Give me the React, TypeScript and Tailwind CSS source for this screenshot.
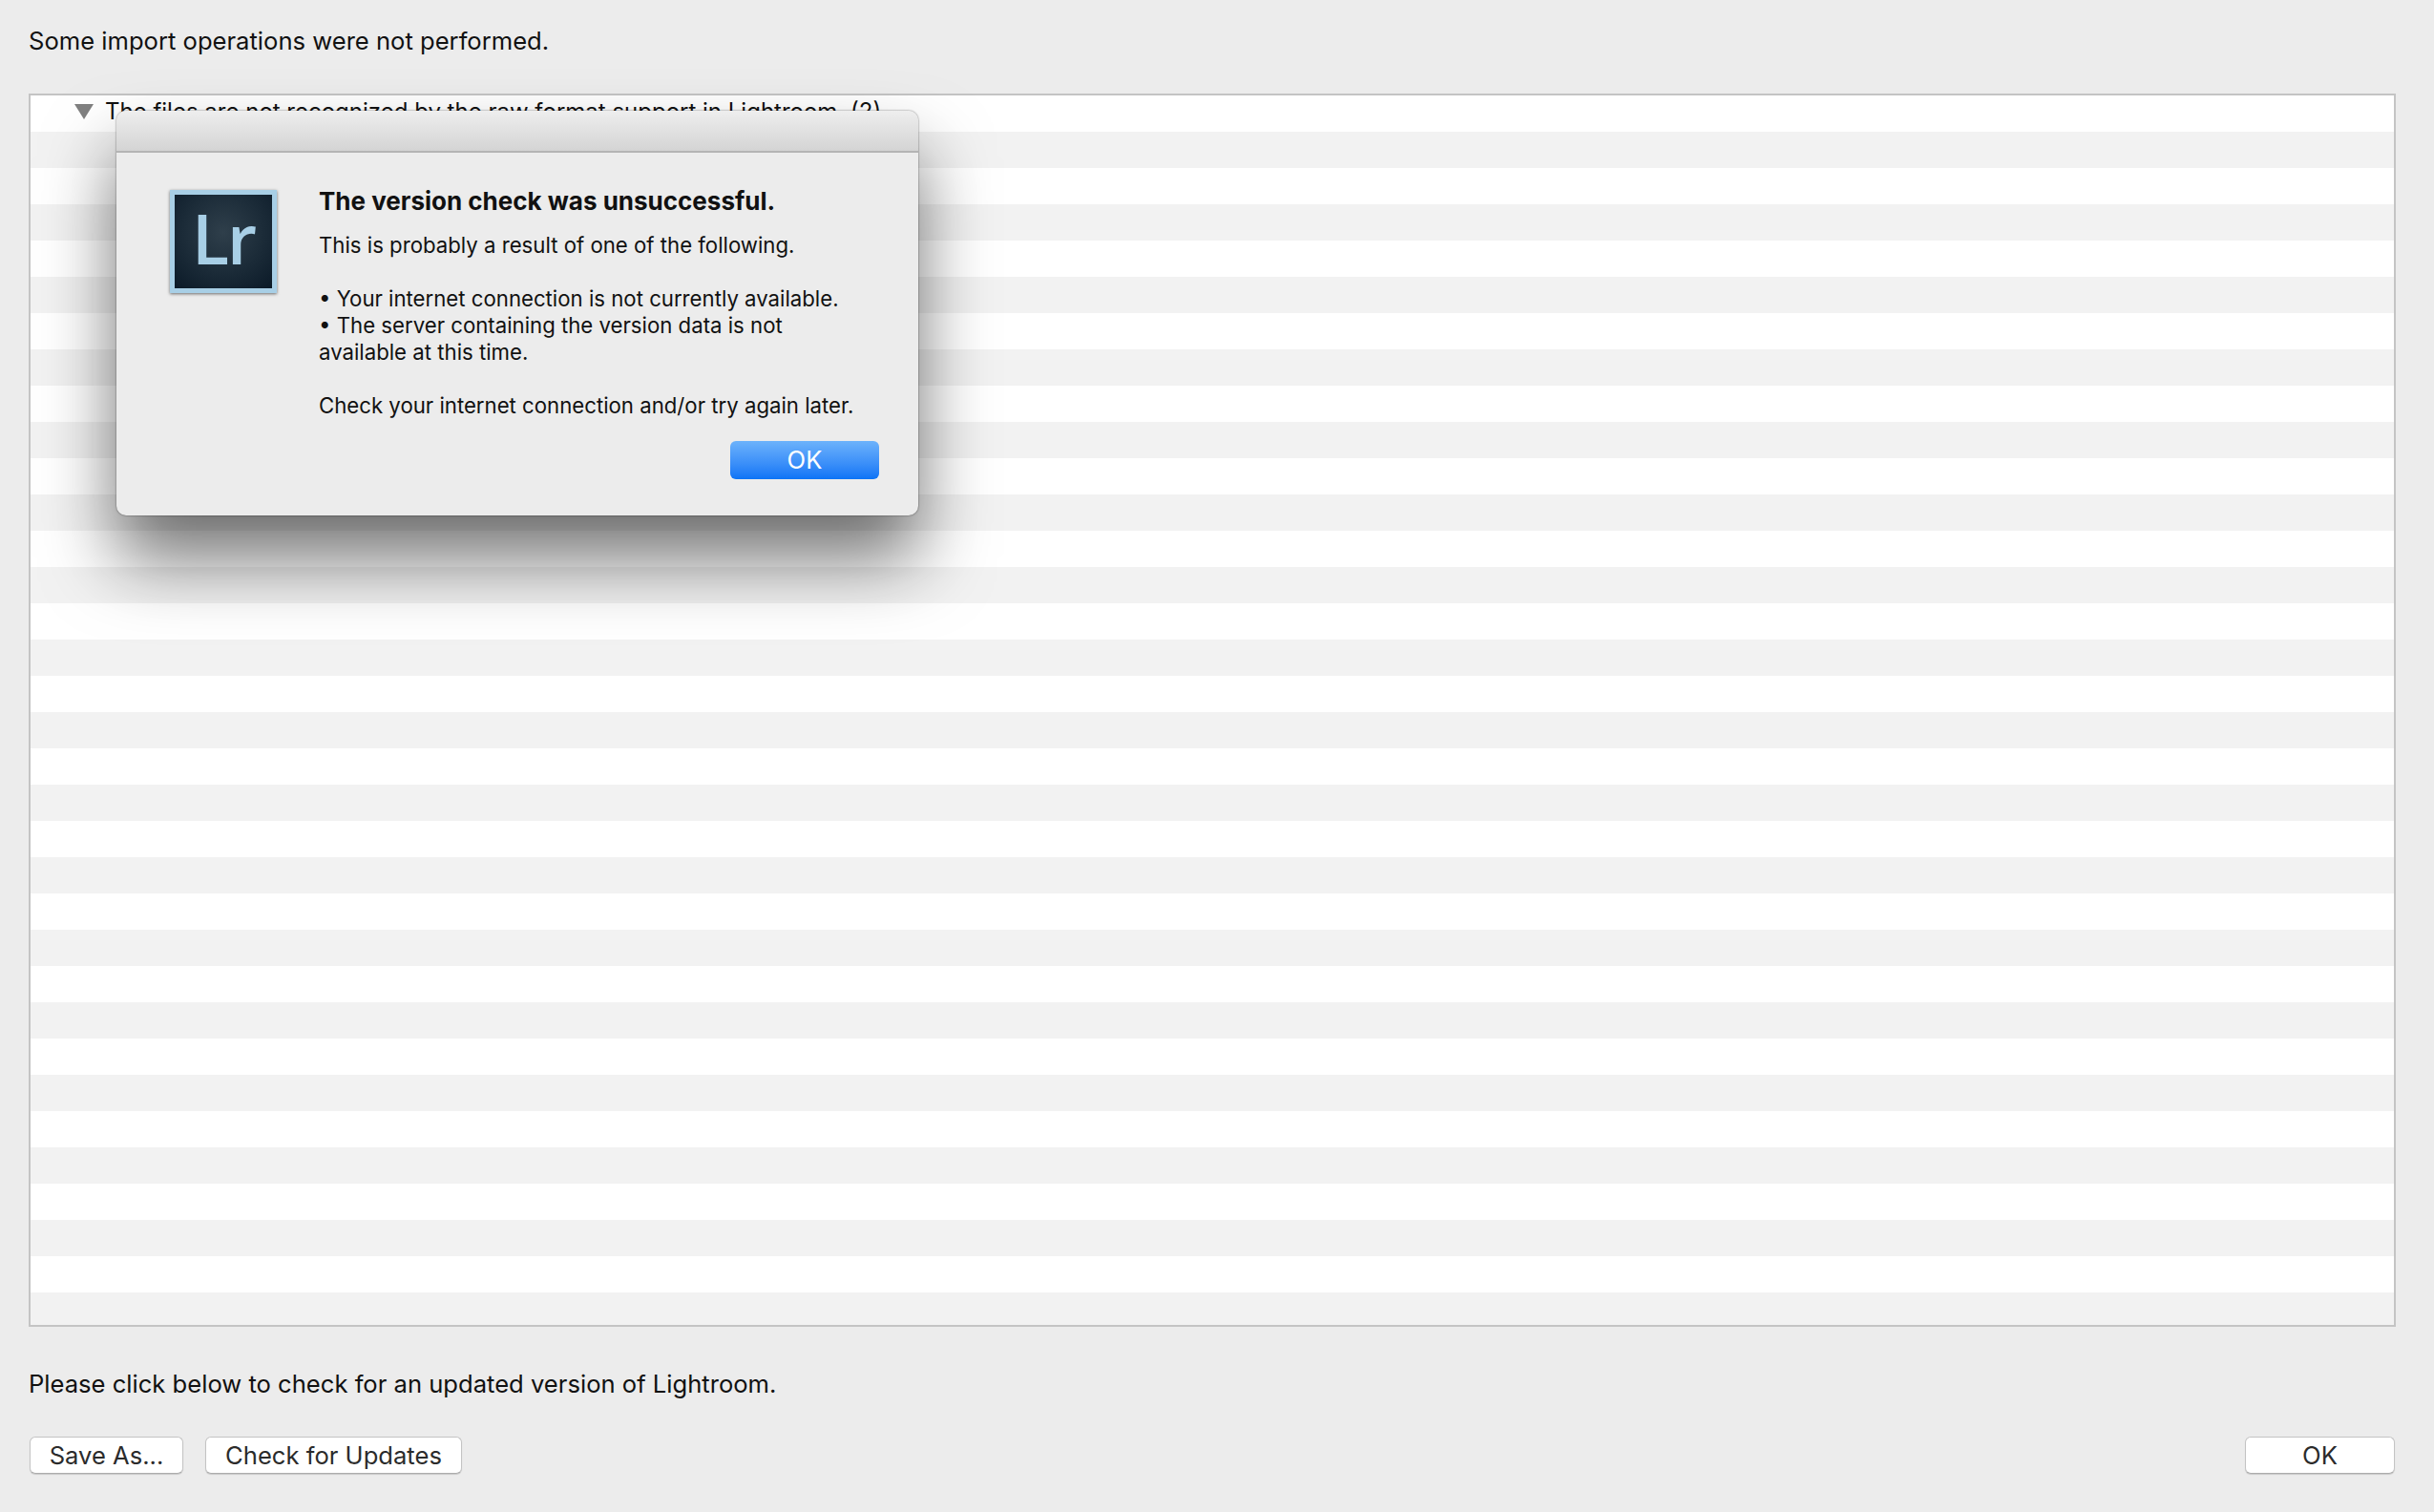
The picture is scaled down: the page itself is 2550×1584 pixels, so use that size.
import React from "react";

const rows = Array.from({ length: 34 });

function WhiteButton({ label, className }: { label: string; className: string }) {
  return (
    <button className={`h-[39px] rounded-[6px] border border-[#c4c4c4] border-b-[#adadad] bg-white text-[25.6px] leading-none text-[#2b2b2b] shadow-[0_1px_1px_rgba(0,0,0,0.15)] ${className}`}>
      {label}
    </button>
  );
}

function LrIcon() {
  return (
    <div className="flex h-[108px] w-[112px] shrink-0 items-center justify-center border-[5px] border-[#a8cfe6] bg-[radial-gradient(circle_at_50%_40%,#2f3f4b_0%,#1b2b38_55%,#0b1a28_100%)] pb-[9px] shadow-[0_1px_3px_rgba(0,0,0,0.55)]">
      <span className="text-[72px] font-semibold leading-none tracking-[-2px] text-[#a8cfe6] font-['Open_Sans',sans-serif]">Lr</span>
    </div>
  );
}

export default function App() {
  return (
    <div className="relative flex h-[1584px] w-[2550px] flex-col overflow-hidden bg-[#ececec] px-[30px] pr-[40px] font-['Inter',sans-serif] text-[#111]">
      <p className="flex h-[98px] items-start pt-[25px] text-[25.6px] leading-[36px]">Some import operations were not performed.</p>

      <div className="h-[1292px] overflow-hidden border-2 border-[#c4c4c4] bg-white">
        {rows.map((_, i) => (
          <div key={i} className={`h-[38px] ${i % 2 === 1 ? "bg-[#f2f2f2]" : "bg-white"}`}>
            {i === 0 && (
              <div className="flex items-center pl-[46px] pt-[2px] text-[24px] leading-[30px]">
                <span className="h-0 w-0 border-x-[10px] border-t-[16px] border-x-transparent border-t-[#808080]" />
                <span className="ml-[12px]">The files are not recognized by the raw format support in Lightroom. (2)</span>
              </div>
            )}
          </div>
        ))}
      </div>

      <p className="mt-[42px] text-[25.6px] leading-[36px]">Please click below to check for an updated version of Lightroom.</p>

      <div className="mt-[37px] flex items-start px-[1px]">
        <WhiteButton label="Save As..." className="w-[161px]" />
        <WhiteButton label="Check for Updates" className="ml-[23px] w-[269px]" />
        <WhiteButton label="OK" className="ml-auto w-[157px]" />
      </div>

      <div className="absolute left-[122px] top-[116px] h-[424px] w-[840px] overflow-hidden rounded-[10px] bg-[#ececec] shadow-[0_0_2px_rgba(0,0,0,0.6),0_46px_76px_rgba(0,0,0,0.55)]">
        <div className="h-[44px] border-b-2 border-[#b4b4b4] bg-gradient-to-b from-[#eeeeee] to-[#d4d4d4]" />
        <div className="flex pl-[56px] pr-[41px] pt-[39px]">
          <LrIcon />
          <div className="ml-[44px] flex-1">
            <h2 className="-mt-[4px] text-[26px] font-bold leading-[32px]">The version check was unsuccessful.</h2>
            <p className="mt-[16px] text-[22.2px] leading-[28px]">This is probably a result of one of the following.</p>
            <p className="mt-[28px] text-[22.2px] leading-[28px]">• Your internet connection is not currently available.</p>
            <p className="text-[22.2px] leading-[28px]">• The server containing the version data is not<br />available at this time.</p>
            <p className="mt-[28px] text-[22.2px] leading-[28px]">Check your internet connection and/or try again later.</p>
            <div className="mt-[23px] flex justify-end">
              <button className="h-[40px] w-[156px] rounded-[6px] bg-gradient-to-b from-[#6cb2fb] to-[#0a74f6] text-[25.6px] leading-none text-white">OK</button>
            </div>
          </div>
        </div>
      </div>
    </div>
  );
}
